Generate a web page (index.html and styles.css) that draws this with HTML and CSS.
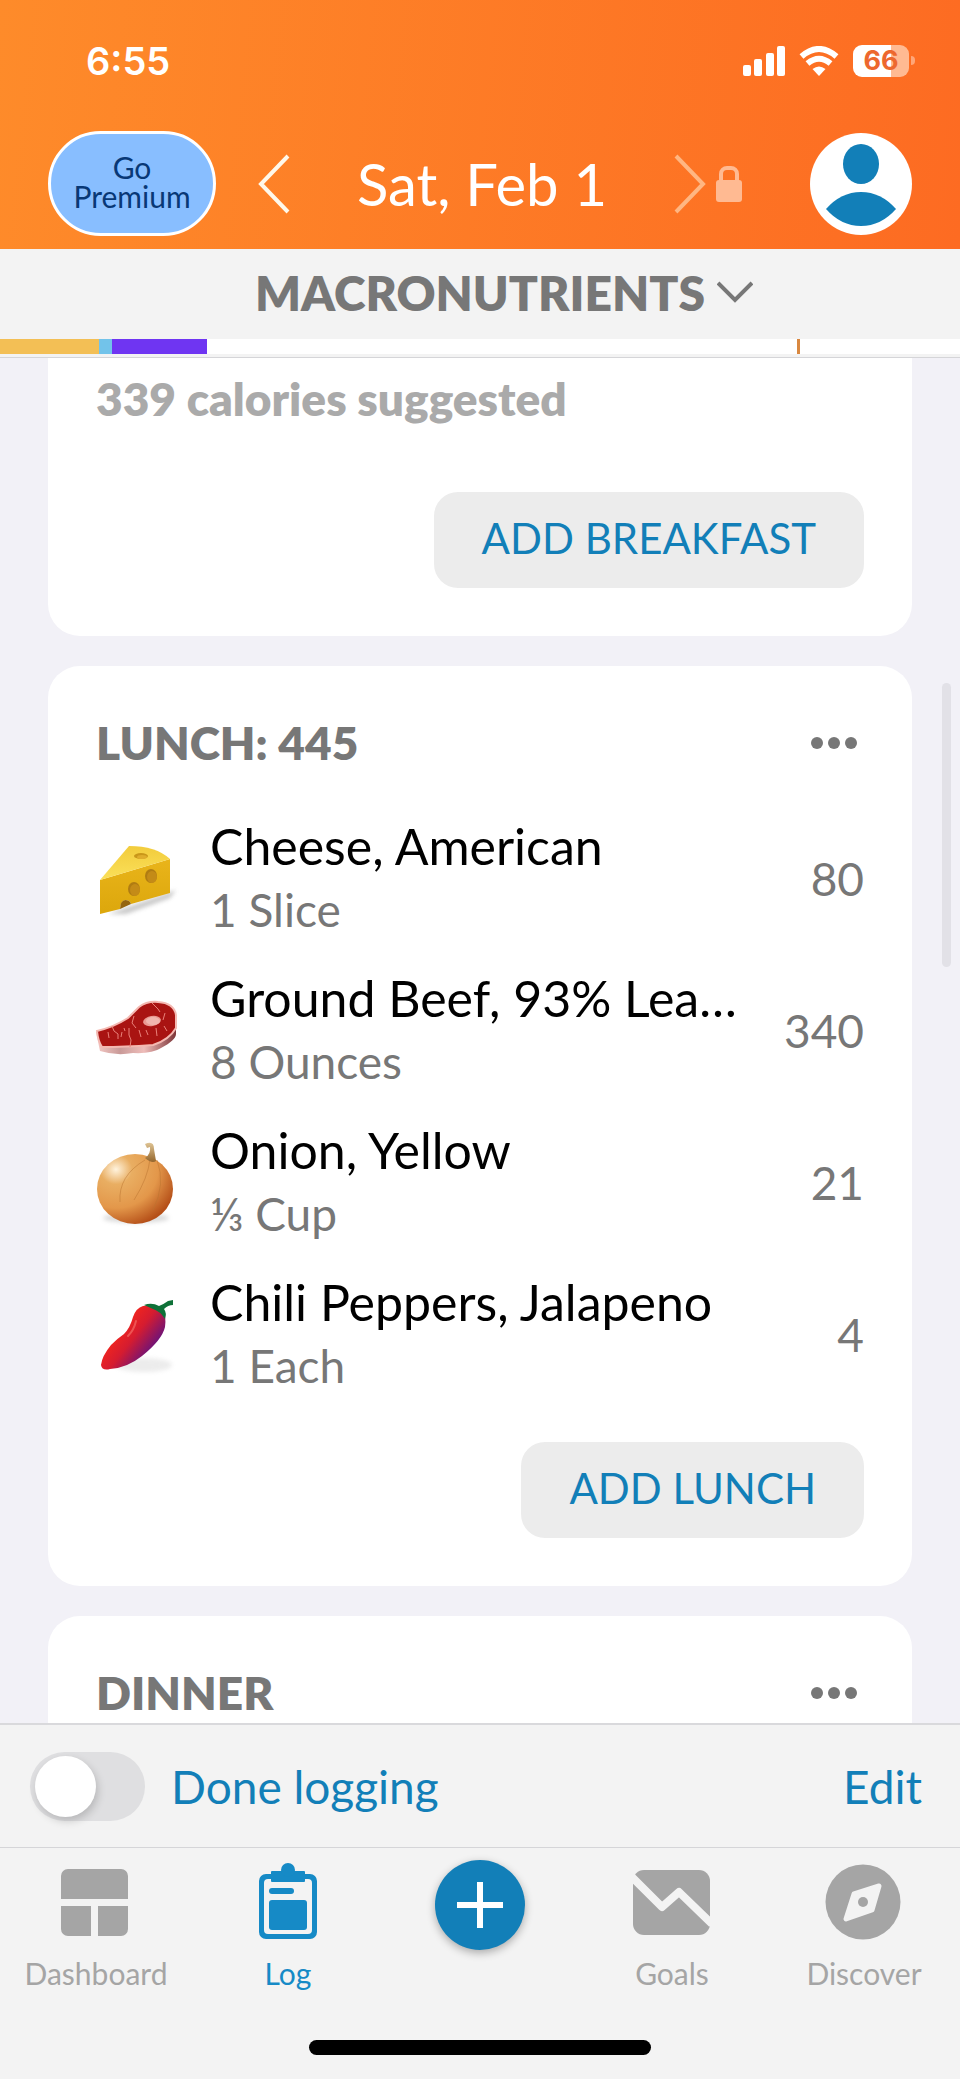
FILE: index.html
```html
<!DOCTYPE html>
<html lang="en">
<head>
<meta charset="utf-8">
<meta name="viewport" content="width=device-width, initial-scale=1">
<title>Food log</title>
<link rel="stylesheet" href="styles.css">
</head>
<body>
<div class="app">
  <header class="header">
    <div class="status">
      <span class="time">6:55</span>
      <div class="status-icons">
        <svg class="signal" viewBox="0 0 42 30" aria-hidden="true"><g fill="#fff"><rect x="0" y="19" width="8" height="11" rx="2"/><rect x="11" y="13" width="8" height="17" rx="2"/><rect x="23" y="7" width="8" height="23" rx="2"/><rect x="34" y="0" width="8" height="30" rx="2"/></g></svg>
        <svg class="wifi" viewBox="0 0 40 30" aria-hidden="true"><g fill="none" stroke="#fff" stroke-width="6"><path d="M2.500 10.500Q20-4.500 37.500 10.500"/><path d="M8.500 17.500Q20 8 31.500 17.500"/></g><path d="M20 30l-6.500-7Q20 18 26.500 23z" fill="#fff"/></svg>
        <span class="battery"><span class="battery-level">66</span></span>
      </div>
    </div>
    <nav class="nav">
      <button class="premium" type="button">Go Premium</button>
      <div class="date-nav">
        <button class="plain" type="button" aria-label="Previous day"><svg class="chevron" viewBox="0 0 32 60"><path d="M30 2L3 30l27 28" fill="none" stroke="#fff8ea" stroke-width="4"/></svg></button>
        <h1 class="date">Sat, Feb 1</h1>
        <button class="plain next" type="button" aria-label="Next day, locked"><svg class="chevron" viewBox="0 0 32 60"><path d="M2 2l27 28L2 58" fill="none" stroke="#ffb682" stroke-width="4"/></svg><svg class="lock" viewBox="0 0 26 38"><path d="M5 16V9a6 6 0 0 1 6-6h4a6 6 0 0 1 6 6v7" fill="none" stroke="#ffba92" stroke-width="4"/><rect y="15" width="26" height="22" rx="3" fill="#ffba92"/></svg></button>
      </div>
      <button class="plain" type="button" aria-label="Profile"><svg class="avatar" viewBox="0 0 102 102"><circle cx="51" cy="51" r="51" fill="#fff"/><ellipse cx="51" cy="31" rx="18" ry="20" fill="#127fb8"/><path d="M16 76Q31 59 51 59T86 76Q71 93 51 93T16 76z" fill="#127fb8"/></svg></button>
    </nav>
  </header>

  <div class="summary">
    <button class="summary-title" type="button">MACRONUTRIENTS<svg class="caret" viewBox="0 0 36 22" aria-hidden="true"><path d="M1 2l17 17L35 2" fill="none" stroke="#777" stroke-width="4"/></svg></button>
    <div class="progress">
      <span class="part carbs" style="width:10.3%"></span>
      <span class="part protein" style="width:1.4%"></span>
      <span class="part fat" style="width:9.9%"></span>
      <span class="target" style="left:83%"></span>
    </div>
  </div>

  <main class="content">
    <section class="card card-continued">
      <p class="hint">339 calories suggested</p>
      <button class="add" type="button">ADD BREAKFAST</button>
    </section>

    <section class="card">
      <div class="card-head">
        <h2 class="meal">LUNCH: 445</h2>
        <button class="plain" type="button" aria-label="Lunch options"><svg class="dots" viewBox="0 0 48 24"><g fill="#777"><circle cx="7" cy="12" r="6"/><circle cx="24" cy="12" r="6"/><circle cx="41" cy="12" r="6"/></g></svg></button>
      </div>
      <ul class="foods">
        <li class="food">
          <svg class="food-icon" viewBox="0 0 80 80" aria-hidden="true">
            <defs>
              <linearGradient id="cheeseSide" x2="0" y2="1"><stop stop-color="#e9b41a"/><stop offset="1" stop-color="#dca70c"/></linearGradient>
              <linearGradient id="cheeseTop" x2="0" y2="1"><stop stop-color="#f2cc3c"/><stop offset="1" stop-color="#fbe05a"/></linearGradient>
              <filter id="soft" x="-20%" y="-50%" width="140%" height="200%"><feGaussianBlur stdDeviation="2"/></filter>
            </defs>
            <path d="M12 76L80 52L74 60L30 76z" fill="#777" opacity=".4" filter="url(#soft)"/>
            <path d="M4 42L74 21V55L35 66Q34 62 29 62Q24 64 24 71L4 76z" fill="url(#cheeseSide)"/>
            <path d="M33 8Q60 8 74 21L4 42z" fill="url(#cheeseTop)"/>
            <ellipse cx="45" cy="18" rx="7" ry="3" fill="#c99719"/><ellipse cx="46" cy="19" rx="5" ry="2" fill="#dfad2c"/>
            <ellipse cx="55" cy="38" rx="6" ry="7" fill="#b07c12"/><ellipse cx="56" cy="39" rx="5" ry="6" fill="#c48b17"/>
            <ellipse cx="38" cy="51" rx="6" ry="7" fill="#b07c12"/><ellipse cx="39" cy="52" rx="5" ry="6" fill="#c48b17"/>
            <path d="M24 71Q24 63 29 62Q34 62 35 66L24 71z" fill="#95650f"/>
          </svg>
          <div class="food-text"><span class="food-name">Cheese, American</span><span class="amount">1 Slice</span></div>
          <span class="calories">80</span>
        </li>
        <li class="food">
          <svg class="food-icon" viewBox="0 0 80 80" aria-hidden="true">
            <defs><linearGradient id="rind"><stop stop-color="#f5c9c5"/><stop offset=".3" stop-color="#c99a98"/><stop offset=".6" stop-color="#eebdba"/><stop offset="1" stop-color="#7d3437"/></linearGradient></defs>
            <path d="M0 42L4 61Q20 66 37 63Q56 64 65 58Q80 50 80 44V24L60 50z" fill="url(#rind)"/>
            <path d="M1 41Q18 37 32 28Q36 24 43 17Q51 11 62 12Q78 13 80 25V38Q73 50 57 55Q28 57 6 57Q2 51 1 41z" fill="#a91412" stroke="#f4b9b2" stroke-width="2"/>
            <g fill="none" stroke="#e9827a" stroke-width="1"><path d="M16 36l2 5 4 3v5M38 26l-2 7 4 5M33 38v7l2 5-1 7M56 13l6 6 2 3M69 23l-2 7M60 38l1 8M12 42l1 6M26 42l-1 5M43 40l2 7M50 40l2 5M68 36l3 5M28 38l1 3"/></g>
            <ellipse cx="56" cy="31" rx="9" ry="5" fill="#e99a92" transform="rotate(-10 56 31)"/><ellipse cx="57" cy="31" rx="7" ry="4" fill="#f0b6ae"/>
          </svg>
          <div class="food-text"><span class="food-name">Ground Beef, 93% Lea…</span><span class="amount">8 Ounces</span></div>
          <span class="calories">340</span>
        </li>
        <li class="food">
          <svg class="food-icon" viewBox="0 0 80 80" aria-hidden="true">
            <defs>
              <radialGradient id="onion" cx=".25" cy=".22" r=".85"><stop stop-color="#fff3dd"/><stop offset=".25" stop-color="#e9ae62"/><stop offset=".65" stop-color="#e3974a"/><stop offset="1" stop-color="#b54f18"/></radialGradient>
              <linearGradient id="stem" x2="0" y2="1"><stop stop-color="#dfc494"/><stop offset="1" stop-color="#94662d"/></linearGradient>
            </defs>
            <ellipse cx="40" cy="76" rx="33" ry="5" fill="#999" opacity=".35" filter="url(#soft)"/>
            <ellipse cx="39" cy="47" rx="38" ry="35" fill="url(#onion)"/>
            <g fill="none" stroke="#b97430" stroke-width="1" opacity=".5"><path d="M49 18Q22 34 24 60M54 17Q52 36 38 58M61 18Q70 42 57 68"/></g>
            <path d="M49 2Q58-2 58 7L60 19Q56 22 49 16Q55 12 54 5L51 6z" fill="url(#stem)"/>
          </svg>
          <div class="food-text"><span class="food-name">Onion, Yellow</span><span class="amount">⅓ Cup</span></div>
          <span class="calories">21</span>
        </li>
        <li class="food">
          <svg class="food-icon" viewBox="0 0 80 80" aria-hidden="true">
            <defs><linearGradient id="chili" x1=".3" y1=".4" x2=".75" y2=".75"><stop stop-color="#ee2420"/><stop offset=".4" stop-color="#d51c30"/><stop offset="1" stop-color="#6d1379"/></linearGradient></defs>
            <ellipse cx="48" cy="71" rx="28" ry="7" fill="#999" opacity=".18" filter="url(#soft)"/>
            <path d="M47 12Q40 14 37 23Q34 34 28 40Q22 44 15 51Q6 62 5 71Q6 77 14 75Q31 74 46 62Q66 46 69 33Q72 13 55 11z" fill="url(#chili)"/>
            <path d="M40 27Q38 36 32 42" fill="none" stroke="#ff9385" stroke-width="2" stroke-linecap="round" opacity=".45"/>
            <path d="M48 11Q56 8 63 12Q68 10 72 7L77 6V11Q72 11 68 15Q71 19 69 25Q64 17 57 15z" fill="#0e7138"/>
          </svg>
          <div class="food-text"><span class="food-name">Chili Peppers, Jalapeno</span><span class="amount">1 Each</span></div>
          <span class="calories">4</span>
        </li>
      </ul>
      <button class="add" type="button">ADD LUNCH</button>
    </section>

    <section class="card">
      <div class="card-head">
        <h2 class="meal">DINNER</h2>
        <button class="plain" type="button" aria-label="Dinner options"><svg class="dots" viewBox="0 0 48 24"><g fill="#777"><circle cx="7" cy="12" r="6"/><circle cx="24" cy="12" r="6"/><circle cx="41" cy="12" r="6"/></g></svg></button>
      </div>
    </section>
    <span class="scroll-thumb"></span>
  </main>

  <div class="day-bar">
    <label class="done"><input class="switch" type="checkbox">Done logging</label>
    <button class="plain edit" type="button">Edit</button>
  </div>

  <footer class="footer">
    <nav class="tabs">
      <a class="tab" href="#dashboard"><svg class="tab-icon" viewBox="0 0 80 80" aria-hidden="true"><path d="M12 6h53a7 7 0 0 1 7 7v23H5V13a7 7 0 0 1 7-7zM5 43h30v30H12a7 7 0 0 1-7-7zM42 43h30v23a7 7 0 0 1-7 7H42z" fill="#a5a5a5"/></svg>Dashboard</a>
      <a class="tab active" href="#log"><svg class="tab-icon" viewBox="0 0 80 80" aria-hidden="true"><g fill="#168ac6"><path d="M18 11h44a7 7 0 0 1 7 7v51a7 7 0 0 1-7 7H18a7 7 0 0 1-7-7V18a7 7 0 0 1 7-7zM20 16a4 4 0 0 0-4 4v47a4 4 0 0 0 4 4h40a4 4 0 0 0 4-4V20a4 4 0 0 0-4-4z" fill-rule="evenodd"/><rect x="23" y="8" width="34" height="11" rx="1"/><circle cx="40" cy="7" r="7"/><rect x="21" y="25" width="25" height="6" rx="3"/><rect x="21" y="37" width="38" height="30" rx="3"/></g></svg>Log</a>
      <button class="fab" type="button" aria-label="Add"><svg viewBox="0 0 90 90"><path d="M45 22v46M22 45h46" stroke="#fff" stroke-width="6"/></svg></button>
      <a class="tab" href="#goals"><svg class="tab-icon" viewBox="0 0 80 80" aria-hidden="true"><rect x="1" y="7" width="77" height="65" rx="11" fill="#a5a5a5"/><path d="M-1 13L30 44L47 29L80 61" fill="none" stroke="#f3f3f3" stroke-width="8" stroke-linejoin="round"/></svg>Goals</a>
      <a class="tab" href="#discover"><svg class="tab-icon" viewBox="0 0 80 80" aria-hidden="true"><circle cx="39" cy="39" r="37.500" fill="#a5a5a5"/><path d="M55 23L48 47L22 56L30 31z" fill="#f3f3f3" stroke="#f3f3f3" stroke-width="5" stroke-linejoin="round"/><circle cx="39" cy="39" r="5" fill="#a5a5a5"/></svg>Discover</a>
    </nav>
    <div class="home-indicator"></div>
  </footer>
</div>
</body>
</html>
```
FILE: styles.css
```css
* { box-sizing: border-box; }

body {
  margin: 0;
  font-family: Lato, "Liberation Sans", sans-serif;
  color: #000;
  background: #f2f1f7;
}

button {
  font: inherit;
  color: inherit;
  border: 0;
  padding: 0;
  cursor: pointer;
}

svg { display: block; }

.plain { background: none; }

.app {
  display: flex;
  flex-direction: column;
  height: 100vh;
}

/* Header */
.header {
  flex: none;
  padding: 36px 48px 13px;
  color: #fff;
  background: linear-gradient(96deg, #fe8b2a, #fd6b22);
}

.status {
  display: flex;
  align-items: center;
  justify-content: space-between;
  height: 50px;
  margin-bottom: 45px;
  padding: 0 3px 0 38px;
  font-family: Inter, sans-serif;
  font-weight: 600;
}

.time { font-size: 38px; }

.status-icons {
  display: flex;
  align-items: center;
  gap: 14px;
}

.signal { width: 42px; height: 30px; }
.wifi { width: 40px; height: 30px; }

.battery {
  position: relative;
  width: 56px;
  height: 32px;
  border-radius: 9px;
  background: linear-gradient(90deg, #fff 67%, #ffba92 67%);
}

.battery::after {
  content: "";
  position: absolute;
  right: -6px;
  top: 11px;
  width: 4px;
  height: 9px;
  border-radius: 0 4px 4px 0;
  background: #ffa678;
}

.battery-level {
  display: block;
  text-align: center;
  color: #ed682e;
  font-size: 27px;
  line-height: 32px;
  font-weight: 700;
}

.nav {
  display: flex;
  align-items: center;
}

.premium {
  width: 168px;
  height: 105px;
  padding: 0 16px 4px;
  border: 3px solid #fff;
  border-radius: 53px;
  background: #88beff;
  color: #083876;
  font-size: 30px;
  line-height: 29px;
}

.date-nav {
  flex: 1;
  display: flex;
  align-items: center;
  margin: 0 68px 0 42px;
}

.chevron { width: 32px; height: 60px; }

.date {
  flex: 1;
  margin: 0;
  text-align: center;
  font-size: 58px;
  line-height: 64px;
  font-weight: 400;
}

.next {
  display: flex;
  align-items: center;
  gap: 10px;
}

.lock { width: 26px; height: 38px; }
.avatar { width: 102px; height: 102px; }

/* Nutrient summary */
.summary {
  flex: none;
  padding-bottom: 3px;
  background: #f3f3f3;
  border-bottom: 1px solid #d5d5d8;
}

.summary-title {
  display: flex;
  align-items: center;
  gap: 12px;
  margin: 0 auto;
  height: 90px;
  padding: 0 0 4px 48px;
  background: none;
  color: #777;
  font-size: 48px;
  font-weight: 800;
}

.caret { width: 36px; height: 22px; }

.progress {
  position: relative;
  display: flex;
  height: 15px;
  background: #fff;
}

.carbs { background: #f3bf55; }
.protein { background: #72c3ea; }
.fat { background: #6f35f2; }

.target {
  position: absolute;
  top: 0;
  bottom: 0;
  width: 3px;
  background: #d98840;
}

/* Meals */
.content {
  position: relative;
  flex: 1;
  min-height: 0;
  overflow: hidden;
  padding: 0 48px;
}

.card {
  display: flex;
  flex-direction: column;
  margin-bottom: 30px;
  padding: 48px;
  border-radius: 32px;
  background: #fff;
}

.card-continued {
  padding-top: 12px;
  border-radius: 0 0 32px 32px;
}

.hint {
  margin: 0 0 64px;
  color: #aaa;
  font-size: 46px;
  line-height: 58px;
  font-weight: 800;
}

.card-head {
  display: flex;
  align-items: center;
  justify-content: space-between;
  height: 58px;
}

.meal {
  margin: 0;
  color: #777;
  font-size: 46px;
  line-height: 58px;
  font-weight: 800;
}

.dots { width: 48px; height: 24px; margin-right: 6px; }

.foods {
  list-style: none;
  margin: 30px 0 32px;
  padding: 0;
}

.food {
  display: flex;
  align-items: center;
  padding: 12px 0;
}

.food-icon {
  flex: none;
  width: 80px;
  height: 80px;
  margin-right: 34px;
  overflow: visible;
}

.food-text {
  flex: 1;
  min-width: 0;
  display: flex;
  flex-direction: column;
  line-height: 64px;
}

.food-name {
  overflow: hidden;
  white-space: nowrap;
  text-overflow: ellipsis;
  font-size: 50px;
}

.amount { color: #777; font-size: 46px; }

.calories {
  margin-left: 24px;
  color: #777;
  font-size: 46px;
}

.add {
  align-self: flex-end;
  height: 96px;
  padding: 0 48px 4px;
  border-radius: 24px;
  background: #ececec;
  color: #127fb8;
  font-size: 42px;
}

.scroll-thumb {
  position: absolute;
  top: 325px;
  right: 9px;
  width: 9px;
  height: 284px;
  border-radius: 5px;
  background: #e2e1e7;
}

/* Day completion */
.day-bar {
  flex: none;
  display: flex;
  align-items: center;
  justify-content: space-between;
  height: 124px;
  padding: 0 38px 0 30px;
  border-top: 2px solid #d9d9dc;
  background: #f3f3f3;
  color: #127fb8;
  font-size: 46px;
}

.done {
  display: flex;
  align-items: center;
  gap: 26px;
}

.switch {
  appearance: none;
  width: 115px;
  height: 69px;
  margin: 0;
  padding: 4px 5px;
  border-radius: 35px;
  background: #dfdfe1;
}

.switch::before {
  content: "";
  display: block;
  width: 61px;
  height: 61px;
  border-radius: 50%;
  background: #fff;
  box-shadow: 2px 4px 8px rgba(0, 0, 0, .18);
}

.switch:checked { background: #127fb8; }
.switch:checked::before { margin-left: auto; }

/* Bottom tabs */
.footer {
  flex: none;
  padding: 15px 0 24px;
  border-top: 1px solid #d5d5d8;
  background: #f3f3f3;
}

.tabs {
  display: grid;
  grid-template-columns: repeat(5, 1fr);
  justify-items: center;
  align-items: start;
}

.tab {
  display: flex;
  flex-direction: column;
  align-items: center;
  gap: 12px;
  color: #a5a5a5;
  font-size: 30px;
  line-height: 36px;
  text-decoration: none;
}

.tab.active { color: #168ac6; }
.tab-icon { width: 80px; height: 80px; }

.fab {
  width: 90px;
  height: 90px;
  margin-top: -3px;
  border-radius: 50%;
  background: #127fb8;
  box-shadow: 0 3px 9px rgba(0, 0, 0, .3);
}

.home-indicator {
  width: 342px;
  height: 15px;
  margin: 49px auto 0;
  border-radius: 8px;
  background: #000;
}
```
